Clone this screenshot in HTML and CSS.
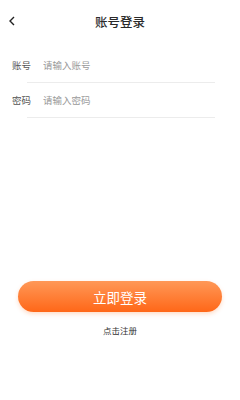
FILE: index.html
```html
<!DOCTYPE html>
<html lang="zh">
<head>
    <meta charset="UTF-8">
    <meta name="viewport" content="width=device-width, initial-scale=1.0">
    <title>账号登录</title>
    <link rel="stylesheet" href="styles.css">
</head>
<body>
    <div class="header">
        <div class="back">
            <svg width="8" height="10" viewBox="0 0 8 10"><path d="M6 1 L2 5 L6 9" fill="none" stroke="#222" stroke-width="1.4"/></svg>
        </div>
        <h1>账号登录</h1>
    </div>

    <div class="form">
        <div class="row">
            <span class="label">账号</span>
            <input type="text" placeholder="请输入账号">
        </div>
        <div class="row">
            <span class="label">密码</span>
            <input type="password" placeholder="请输入密码">
        </div>
    </div>

    <div class="actions">
        <button class="login">立即登录</button>
        <div class="register">点击注册</div>
    </div>
</body>
</html>
```

FILE: styles.css
```css
* {
    margin: 0;
    padding: 0;
    box-sizing: border-box;
    font-family: "Noto Sans CJK SC", "Noto Sans", sans-serif;
}

body {
    background-color: #fff;
    width: 240px;
    height: 400px;
}

.header {
    height: 42px;
    display: flex;
    align-items: center;
    justify-content: center;
    position: relative;
}

.back {
    position: absolute;
    left: 8px;
    top: 16px;
    display: flex;
}

.header h1 {
    font-size: 12.5px;
    font-weight: 500;
    color: #2a2a2a;
}

.form {
    margin-top: 6px;
    padding-right: 25px;
}

.row {
    display: flex;
    align-items: center;
    height: 35px;
    padding-left: 12px;
    padding-bottom: 2px;
    position: relative;
}

.row::after {
    content: "";
    position: absolute;
    left: 27px;
    right: 0;
    bottom: 0;
    border-bottom: 1px solid #ececec;
}

.label {
    font-size: 9.5px;
    color: #555;
    width: 31px;
}

.row input {
    border: none;
    outline: none;
    font-size: 9.5px;
    color: #333;
    flex: 1;
    background: transparent;
}

.row input::placeholder {
    color: #9a9a9a;
}

.actions {
    margin-top: 163px;
    display: flex;
    flex-direction: column;
    align-items: center;
}

.login {
    width: 204px;
    height: 31px;
    border: none;
    border-radius: 16px;
    background: linear-gradient(#ff9857, #ff6718);
    color: #fff;
    font-size: 13.5px;
    box-shadow: 0 2px 4px rgba(255, 120, 40, 0.25);
}

.register {
    margin-top: 12px;
    font-size: 8.5px;
    color: #333;
}
```
